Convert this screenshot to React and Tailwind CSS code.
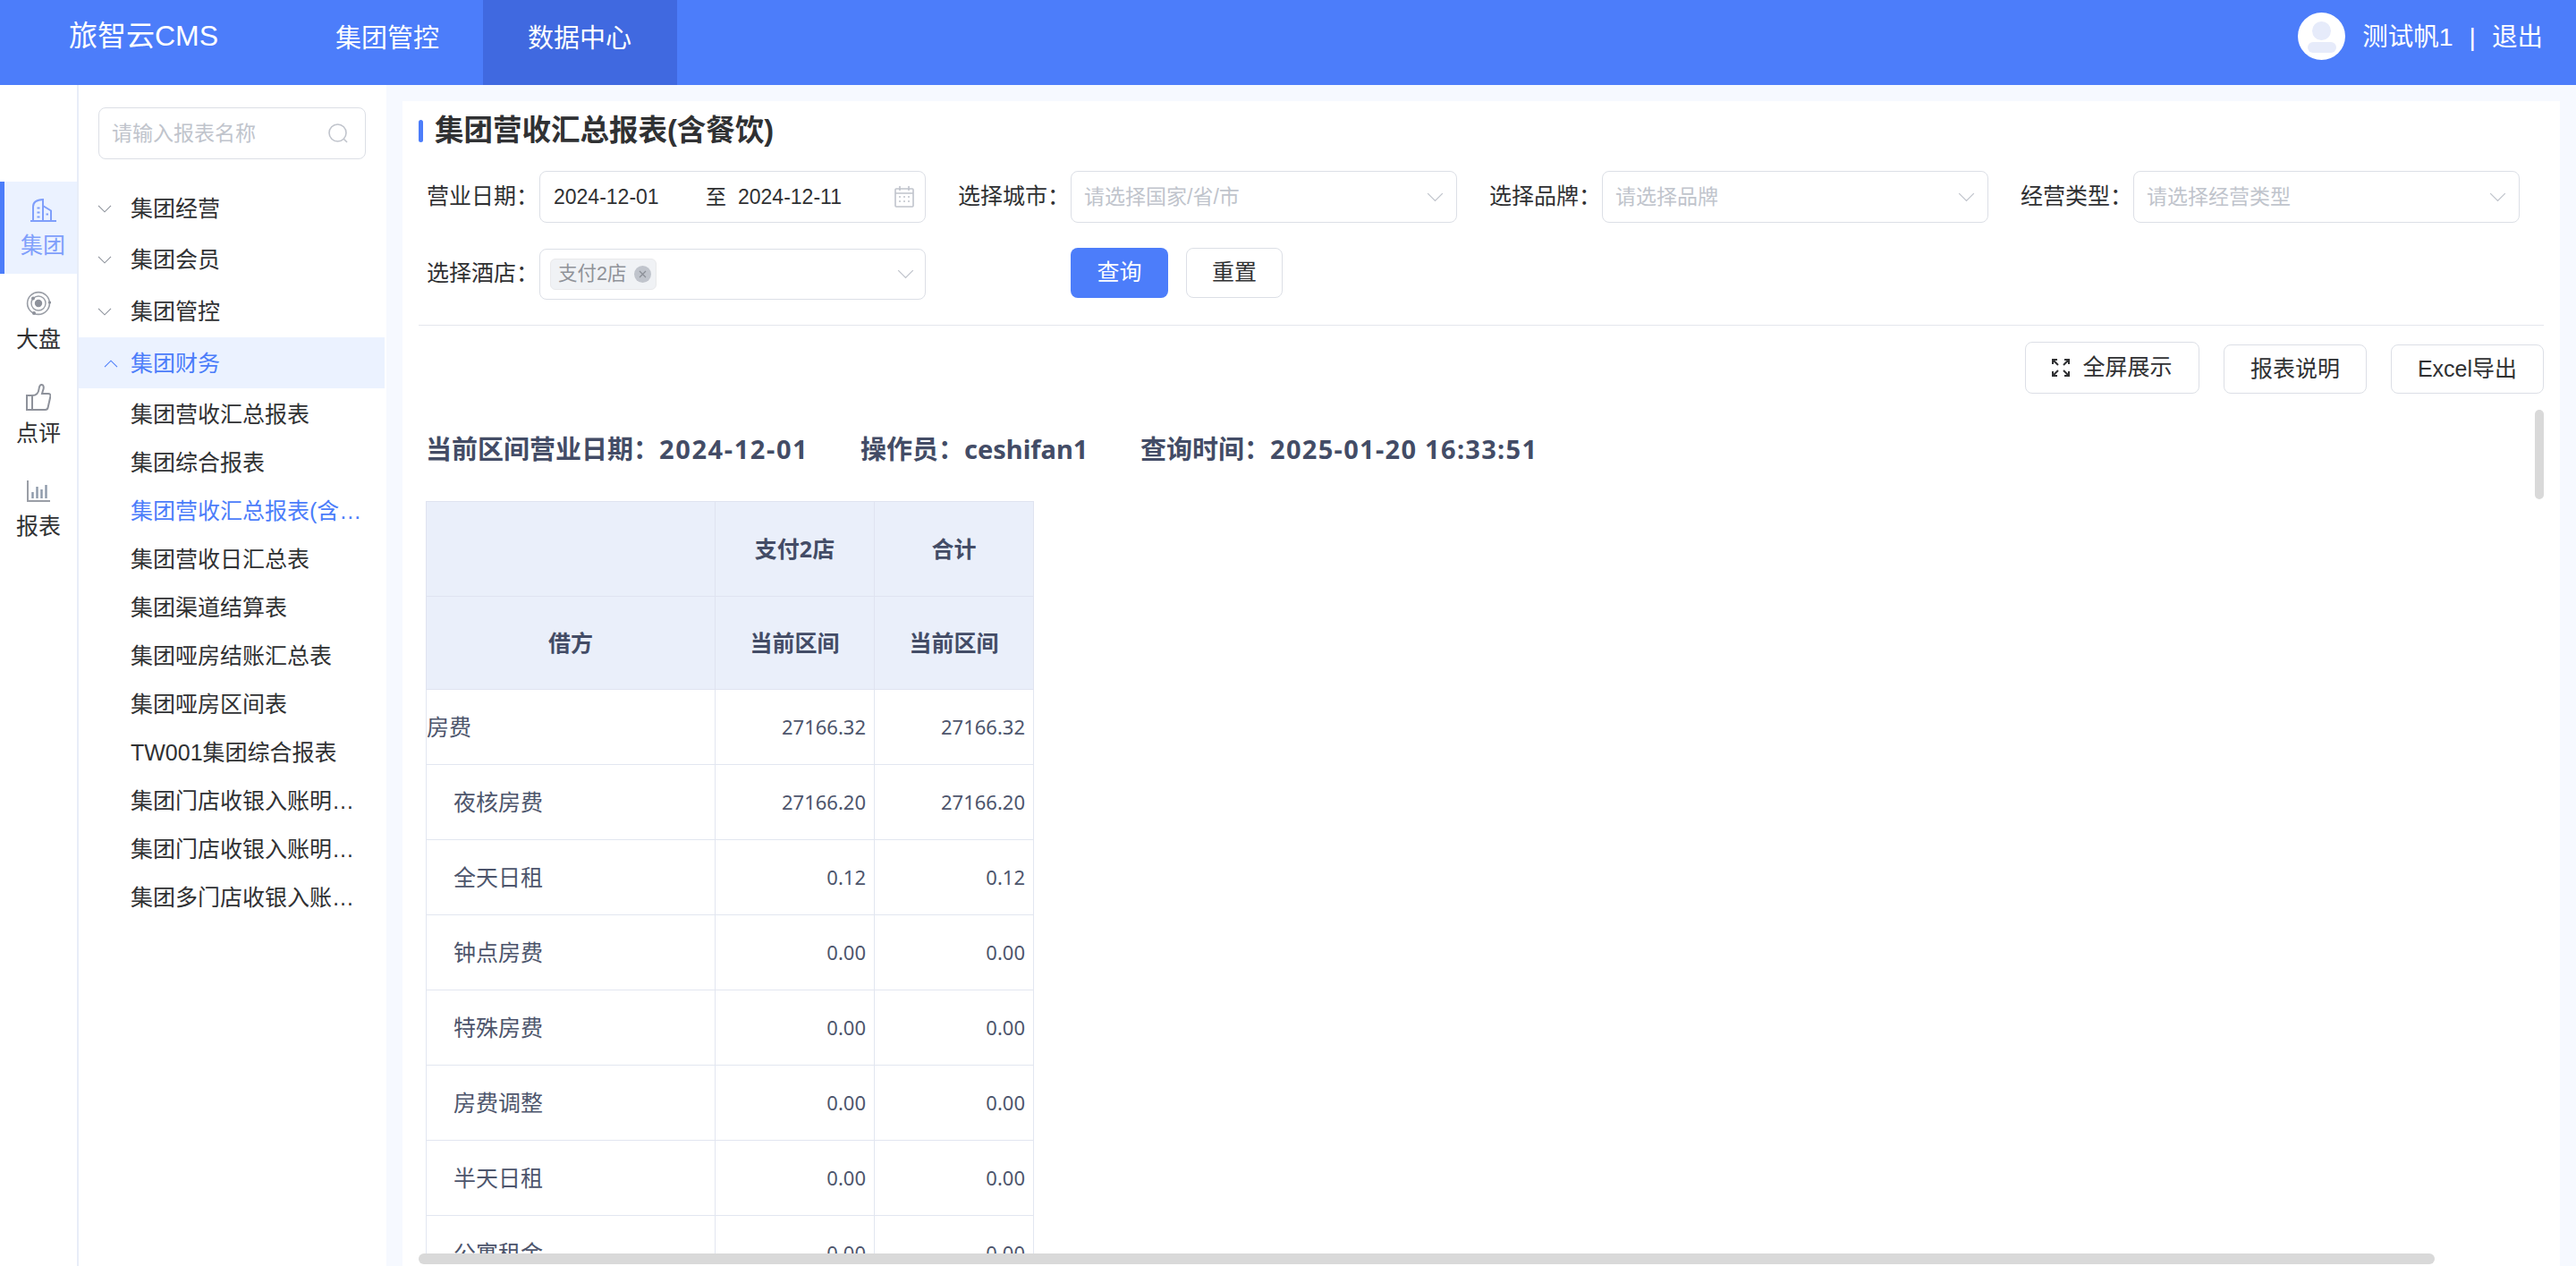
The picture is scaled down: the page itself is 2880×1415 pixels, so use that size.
const MENU = ['集团经营', '集团会员', '集团管控'];

const SUB_MENU = [
  '集团营收汇总报表',
  '集团综合报表',
  '集团营收汇总报表(含餐饮)',
  '集团营收日汇总表',
  '集团渠道结算表',
  '集团哑房结账汇总表',
  '集团哑房区间表',
  'TW001集团综合报表',
  '集团门店收银入账明细报表',
  '集团门店收银入账明细汇总表',
  '集团多门店收银入账明细表',
];

const ROWS = [
  { name: '房费', a: '27166.32', b: '27166.32', top: true },
  { name: '夜核房费', a: '27166.20', b: '27166.20' },
  { name: '全天日租', a: '0.12', b: '0.12' },
  { name: '钟点房费', a: '0.00', b: '0.00' },
  { name: '特殊房费', a: '0.00', b: '0.00' },
  { name: '房费调整', a: '0.00', b: '0.00' },
  { name: '半天日租', a: '0.00', b: '0.00' },
  { name: '公寓租金', a: '0.00', b: '0.00' },
];

function Chevron({ up, className }) {
  return (
    <svg viewBox="0 0 16 9" fill="none" className={className}>
      <path d={up ? 'M1 8.2 8 1.2l7 7' : 'M1 .8l7 7 7-7'} stroke="currentColor" strokeWidth="1.1" />
    </svg>
  );
}

function BuildingIcon() {
  return (
    <svg viewBox="0 0 29 26" fill="none" stroke="#7f9ffb" strokeWidth="2" className="w-[29px] h-[26px]">
      <path d="M0 25h29" />
      <path d="M3 25V9c0-4.500 4-7.600 11-8v24" />
      <path d="M14 8l9 5.500V25" />
      <path d="M7.500 10.500h3M7.500 15.500h3M7.500 20.500h3M17.500 17.500h2.500" />
    </svg>
  );
}

function TargetIcon() {
  return (
    <svg viewBox="0 0 28 28" fill="none" className="w-[28px] h-[28px]">
      <circle cx="14" cy="14" r="12.400" stroke="#9a9ea6" strokeWidth="1.600" />
      <circle cx="14" cy="14" r="8" stroke="#9a9ea6" strokeWidth="1.400" />
      <circle cx="14" cy="14" r="4.200" fill="#8e929b" />
      <circle cx="8" cy="8.500" r="2" fill="#8e929b" />
      <circle cx="9" cy="25" r="2" fill="#8e929b" />
      <circle cx="26.500" cy="13" r="1.600" fill="#8e929b" />
    </svg>
  );
}

function ThumbIcon() {
  return (
    <svg viewBox="0 0 28 30" fill="none" stroke="#8e929b" strokeWidth="2" className="w-[28px] h-[30px]">
      <path d="M1 13h6v16H1z" />
      <path d="M7 13c4 0 7-2.500 7.500-7 .3-2.500 1-5 3-5 2.500 0 2.800 3.500 1.500 6.500l-1 3.500h7c1.800 0 2.800 1.300 2.400 3l-2.800 12.500c-.3 1.500-1.300 2.500-3 2.500H7" />
    </svg>
  );
}

function BarsIcon() {
  return (
    <svg viewBox="0 0 26 24" fill="none" className="w-[26px] h-[24px]">
      <path d="M1 0v23h25" stroke="#9a9ea6" strokeWidth="2" />
      <path d="M6.500 13v7M11.500 7v13M16.500 10v10M21.500 5v15" stroke="#8e9aaa" strokeWidth="2.400" />
    </svg>
  );
}

function Rail() {
  return (
    <div className="w-[88px] shrink-0 bg-white border-r-2 border-[#e8edf8] pt-[108px]">
      <div className="h-[103px] bg-[#ebf2ff] border-l-[5px] border-[#4c7dfa] flex flex-col items-center pt-[19px] pl-[5px] text-[#7f9ffb]">
        <BuildingIcon />
        <span className="text-[25px] leading-[30px] mt-[11px]">集团</span>
      </div>
      <div className="h-[105px] flex flex-col items-center pt-[19px]">
        <TargetIcon />
        <span className="text-[25px] leading-[30px] mt-[11px] text-[#303133]">大盘</span>
      </div>
      <div className="h-[105px] flex flex-col items-center pt-[18px]">
        <ThumbIcon />
        <span className="text-[25px] leading-[30px] mt-[10px] text-[#303133]">点评</span>
      </div>
      <div className="h-[105px] flex flex-col items-center pt-[21px]">
        <BarsIcon />
        <span className="text-[25px] leading-[30px] mt-[12px] text-[#303133]">报表</span>
      </div>
    </div>
  );
}

function MenuPanel() {
  return (
    <div className="w-[344px] shrink-0 bg-white pt-[25px]">
      <div className="ml-[22px] w-[299px] h-[58px] border border-[#dcdfe6] rounded-[8px] flex items-center justify-between pl-[14px] pr-[19px]">
        <span className="text-[23px] text-[#c0c4cc]">请输入报表名称</span>
        <svg viewBox="0 0 22 22" fill="none" stroke="#c0c4cc" strokeWidth="1.600" className="w-[22px] h-[22px]">
          <circle cx="10.500" cy="10.500" r="9.500" />
          <path d="M17.500 17.500 21 21" />
        </svg>
      </div>
      <div className="mt-[26px]">
        {MENU.map((m) => (
          <div key={m} className="h-[57.500px] flex items-center pt-[1px] text-[25px] text-[#303133]">
            <Chevron className="w-[16px] h-[9px] ml-[21px] mr-[21px] text-[#8d929c]" />
            {m}
          </div>
        ))}
        <div className="h-[57px] w-[342px] bg-[#ebf2ff] flex items-center pt-[3px] text-[25px] text-[#4c7dfa]">
          <Chevron up className="w-[16px] h-[9px] ml-[28px] mr-[14px]" />
          集团财务
        </div>
      </div>
      <div className="pt-[2px]">
        {SUB_MENU.map((s, i) => (
          <div key={s} className={`h-[54px] leading-[54px] ml-[58px] w-[262px] truncate text-[25px] ${i === 2 ? 'text-[#4c7dfa]' : 'text-[#303133]'}`}>
            {s}
          </div>
        ))}
      </div>
    </div>
  );
}

function SelectField({ label, placeholder }) {
  return (
    <div className="flex items-center">
      <span className="w-[126px] shrink-0 text-[25px] text-[#303133]">{label}</span>
      <div className="w-[432px] h-[58px] border border-[#dcdfe6] rounded-[8px] flex items-center justify-between pl-[14px] pr-[14px]">
        <span className="text-[23px] text-[#c0c4cc]">{placeholder}</span>
        <Chevron className="w-[19px] h-[11px] text-[#c0c4cc]" />
      </div>
    </div>
  );
}

function Filters() {
  return (
    <div className="pl-[9px] mt-[32px] grid grid-cols-[repeat(4,594px)] gap-y-[28px]">
      <div className="flex items-center">
        <span className="w-[126px] shrink-0 text-[25px] text-[#303133]">营业日期：</span>
        <div className="w-[432px] h-[58px] border border-[#dcdfe6] rounded-[8px] flex items-center pl-[15px] text-[23px] text-[#303133]">
          <span className="w-[170px]">2024-12-01</span>
          <span className="w-[36px]">至</span>
          <span className="w-[175px]">2024-12-11</span>
          <svg viewBox="0 0 22 24" fill="none" stroke="#c0c4cc" strokeWidth="1.600" className="w-[22px] h-[24px]">
            <rect x="1" y="3" width="20" height="20" rx="1" />
            <path d="M1 8h20M6 0v5M16 0v5M5 12h2M10 12h2M15 12h2M5 17h2M10 17h2M15 17h2" />
          </svg>
        </div>
      </div>
      <SelectField label="选择城市：" placeholder="请选择国家/省/市" />
      <SelectField label="选择品牌：" placeholder="请选择品牌" />
      <SelectField label="经营类型：" placeholder="请选择经营类型" />
      <div className="flex items-center">
        <span className="w-[126px] shrink-0 text-[25px] text-[#303133]">选择酒店：</span>
        <div className="w-[432px] h-[57px] border border-[#dcdfe6] rounded-[8px] flex items-center justify-between pl-[11px] pr-[12px]">
          <div className="h-[35px] w-[119px] bg-[#f0f2f5] border border-[#e9e9eb] rounded-[6px] flex items-center pl-[8px]">
            <span className="text-[21.500px] text-[#909399] w-[85px]">支付2店</span>
            <svg viewBox="0 0 19 19" className="w-[19px] h-[19px]">
              <circle cx="9.500" cy="9.500" r="9.500" fill="#c0c4cc" />
              <path d="M6 6l7 7M13 6l-7 7" stroke="#8a8e96" strokeWidth="1.200" />
            </svg>
          </div>
          <Chevron className="w-[19px] h-[11px] text-[#c0c4cc]" />
        </div>
      </div>
      <div className="flex items-center pl-[126px] gap-[20px] mb-[2px]">
        <button className="w-[109px] h-[56px] rounded-[8px] bg-[#4c7dfa] text-white text-[25px]">查询</button>
        <button className="w-[108px] h-[56px] rounded-[8px] border border-[#dcdfe6] bg-white text-[#303133] text-[25px]">重置</button>
      </div>
    </div>
  );
}

function ReportTable() {
  const th = 'border border-[#dfe3f0] bg-[#eaeffa] text-[25px] font-bold text-[#434c66] text-center p-0';
  const td = 'border border-[#e2e6f0] text-[25px] text-[#4d556c] p-0';
  const num = 'border border-[#e2e6f0] text-[22px] text-[#4d556c] text-right pr-[9px] p-0';
  return (
    <table className="table-fixed w-[679px] border-collapse font-[family-name:'Noto_Sans','Noto_Sans_CJK_SC',sans-serif]">
      <colgroup>
        <col className="w-[323px]" />
        <col className="w-[178px]" />
        <col className="w-[178px]" />
      </colgroup>
      <thead>
        <tr className="h-[106px]">
          <th className={th}></th>
          <th className={th}>支付2店</th>
          <th className={th}>合计</th>
        </tr>
        <tr className="h-[104px]">
          <th className={th}>借方</th>
          <th className={th}>当前区间</th>
          <th className={th}>当前区间</th>
        </tr>
      </thead>
      <tbody>
        {ROWS.map((r) => (
          <tr key={r.name} className="h-[84px]">
            <td className={td}>
              <span className={r.top ? 'pl-0' : 'pl-[30px]'}>{r.name}</span>
            </td>
            <td className={num}>{r.a}</td>
            <td className={num}>{r.b}</td>
          </tr>
        ))}
      </tbody>
    </table>
  );
}

export default function App() {
  return (
    <div className="w-[2880px] h-[1415px] overflow-hidden flex flex-col bg-[#f6f9ff] font-[family-name:'Liberation_Sans','Noto_Sans_CJK_SC',sans-serif]">
      <header className="h-[95px] shrink-0 bg-[#4c7dfa] flex text-white">
        <div className="w-[325px] pl-[77px] pt-[16px] text-[32px] leading-[48px]">旅智云CMS</div>
        <div className="w-[215px] pl-[50px] pt-[21px] text-[29px] leading-[44px]">集团管控</div>
        <div className="w-[217px] pl-[50px] pt-[21px] text-[29px] leading-[44px] bg-[#4069e0]">数据中心</div>
        <div className="ml-auto flex items-start pt-[14px] pr-[37px]">
          <div className="w-[53px] h-[53px] rounded-full bg-white relative overflow-hidden flex flex-col items-center">
            <div className="w-[21px] h-[21px] rounded-full bg-[#e6ebfa] mt-[10px]" />
            <div className="w-[32px] h-[12px] rounded-full bg-[#e6ebfa] mt-[2px]" />
          </div>
          <span className="ml-[19px] text-[28.500px] leading-[54px]">测试帆1</span>
          <span className="ml-[18px] text-[28.500px] leading-[54px]">|</span>
          <span className="ml-[18px] text-[28.500px] leading-[54px]">退出</span>
        </div>
      </header>

      <div className="flex flex-1 min-h-0">
        <Rail />
        <MenuPanel />
        <main className="flex-1 min-w-0 px-[18px] pt-[18px]">
          <div className="relative h-full bg-white px-[18px] pt-[21px] pb-[14px] flex flex-col overflow-hidden">
            <div className="flex items-center h-[25px]">
              <span className="w-[5px] h-[25px] rounded-[3px] bg-[#4c7dfa]" />
              <h1 className="ml-[13px] text-[32.500px] font-bold text-[#303133] leading-[25px]">集团营收汇总报表(含餐饮)</h1>
            </div>

            <Filters />

            <div className="mt-[28px] border-t border-[#e4e7ed]" />

            <div className="flex justify-end items-end gap-[27px] mt-[18px]">
              <button className="w-[195px] h-[58px] border border-[#dcdfe6] rounded-[8px] flex items-center justify-center gap-[14px] text-[25px] text-[#303133]">
                <svg viewBox="0 0 20 20" fill="none" stroke="#303133" strokeWidth="2" className="w-[20px] h-[20px]">
                  <path d="M1 6V1h5M1 1l6 6M19 6V1h-5M19 1l-6 6M1 14v5h5M1 19l6-6M19 14v5h-5M19 19l-6-6" />
                </svg>
                全屏展示
              </button>
              <button className="w-[160px] h-[55px] border border-[#dcdfe6] rounded-[8px] text-[25px] text-[#303133]">报表说明</button>
              <button className="w-[171px] h-[55px] border border-[#dcdfe6] rounded-[8px] text-[25px] text-[#303133]">Excel导出</button>
            </div>

            <div className="flex-1 min-h-0 overflow-hidden pl-[8px]">
              <div className="mt-[41px] h-[42px] flex items-center text-[29px] font-bold text-[#434c66] font-[family-name:'Noto_Sans','Noto_Sans_CJK_SC',sans-serif]">
                <span className="w-[486px]">当前区间营业日期：<span className="tracking-[1.600px]">2024-12-01</span></span>
                <span className="w-[313px]">操作员：ceshifan1</span>
                <span>查询时间：<span className="tracking-[1.300px]">2025-01-20 16:33:51</span></span>
              </div>
              <div className="mt-[37px]">
                <ReportTable />
              </div>
            </div>

            <div className="absolute right-[18px] top-[345px] w-[10px] h-[100px] rounded-[5px] bg-[#d9d9d9]" />
            <div className="absolute left-[18px] bottom-[2px] w-[2254px] h-[12px] rounded-[6px] bg-[#d9d9d9]" />
          </div>
        </main>
      </div>
    </div>
  );
}
